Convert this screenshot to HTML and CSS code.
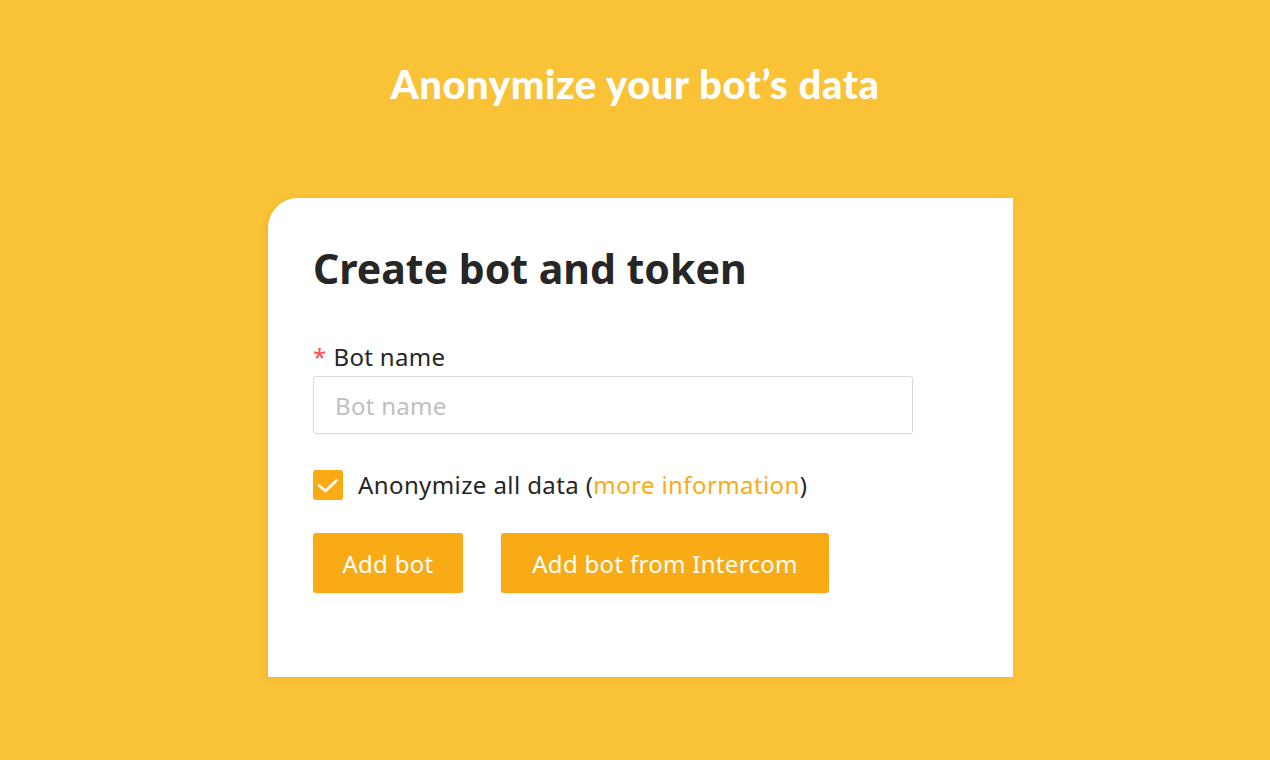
FILE: index.html
```html
<!DOCTYPE html>
<html lang="en">
<head>
<meta charset="utf-8">
<title>Anonymize your bot's data</title>
<link rel="stylesheet" href="styles.css">
</head>
<body>
<main class="page">
  <h1 class="page-title">Anonymize your bot’s data</h1>
  <section class="card">
    <h2 class="card-title">Create bot and token</h2>
    <form class="form">
      <label class="field-label" for="botname"><span class="req">*</span>Bot name</label>
      <input class="input" id="botname" type="text" placeholder="Bot name">
      <label class="check-row">
        <span class="checkbox">
          <svg viewBox="0 0 30 30" width="30" height="30"><path d="M6 15.5 L12.5 21 L23.5 10.5" fill="none" stroke="#fff" stroke-width="2.6" stroke-linecap="round" stroke-linejoin="round"/></svg>
        </span>
        <span class="check-text">Anonymize all data (<a class="link" href="#">more information</a>)</span>
      </label>
      <div class="actions">
        <button type="button" class="btn btn-small">Add bot</button>
        <button type="button" class="btn btn-wide">Add bot from Intercom</button>
      </div>
    </form>
  </section>
</main>
</body>
</html>
```

FILE: styles.css
```css
html, body {
  margin: 0;
  padding: 0;
}
body {
  background: #f9c237;
  font-family: "Noto Sans", "Inter", sans-serif;
  width: 1270px;
  height: 760px;
  overflow: hidden;
}
.page {
  display: flex;
  flex-direction: column;
  align-items: center;
}
.page-title {
  margin: 58px 0 0;
  font-family: "Lato", sans-serif;
  font-weight: 900;
  font-size: 40px;
  line-height: 52px;
  color: #fff;
  letter-spacing: 0.6px;
}
.card {
  margin-top: 88px;
  margin-left: 11px;
  width: 745px;
  height: 479px;
  box-sizing: border-box;
  background: #fff;
  border-top-left-radius: 30px;
  box-shadow: -2px 2px 6px rgba(180, 130, 0, 0.18);
  padding: 40px 45px 0;
}
.card-title {
  margin: 0;
  font-family: "Noto Sans", sans-serif;
  font-weight: 700;
  font-size: 41px;
  line-height: 60px;
  color: #262626;
  letter-spacing: 0;
}
.form {
  display: flex;
  flex-direction: column;
  margin-top: 40px;
}
.field-label {
  display: flex;
  align-items: center;
  font-size: 24px;
  line-height: 38px;
  letter-spacing: 0.3px;
  color: #262626;
}
.req {
  color: #ff4d4f;
  font-size: 24px;
  margin-right: 7px;
}
.input {
  width: 600px;
  height: 58px;
  box-sizing: border-box;
  border: 1px solid #d9d9d9;
  border-radius: 3px;
  padding: 0 21px;
  font-family: "Noto Sans", sans-serif;
  font-size: 24px;
  letter-spacing: 0.3px;
  color: #262626;
  outline: none;
}
.input::placeholder {
  color: #bfbfbf;
}
.check-row {
  display: flex;
  align-items: center;
  gap: 15px;
  margin-top: 36px;
  font-size: 24px;
  line-height: 30px;
  letter-spacing: 0.4px;
  color: #262626;
}
.checkbox {
  width: 30px;
  height: 30px;
  border-radius: 3px;
  background: #f9ab16;
  display: flex;
}
.link {
  color: #f9ab16;
  text-decoration: none;
}
.actions {
  display: flex;
  gap: 38px;
  margin-top: 33px;
}
.btn {
  height: 60px;
  border: none;
  border-radius: 3px;
  background: #f9ab16;
  color: #fff;
  font-family: "Noto Sans", sans-serif;
  font-size: 24px;
  letter-spacing: 0.3px;
  padding: 0;
  box-shadow: 0 2px 0 rgba(0, 0, 0, 0.03);
}
.btn-small {
  width: 150px;
}
.btn-wide {
  width: 328px;
}
```
